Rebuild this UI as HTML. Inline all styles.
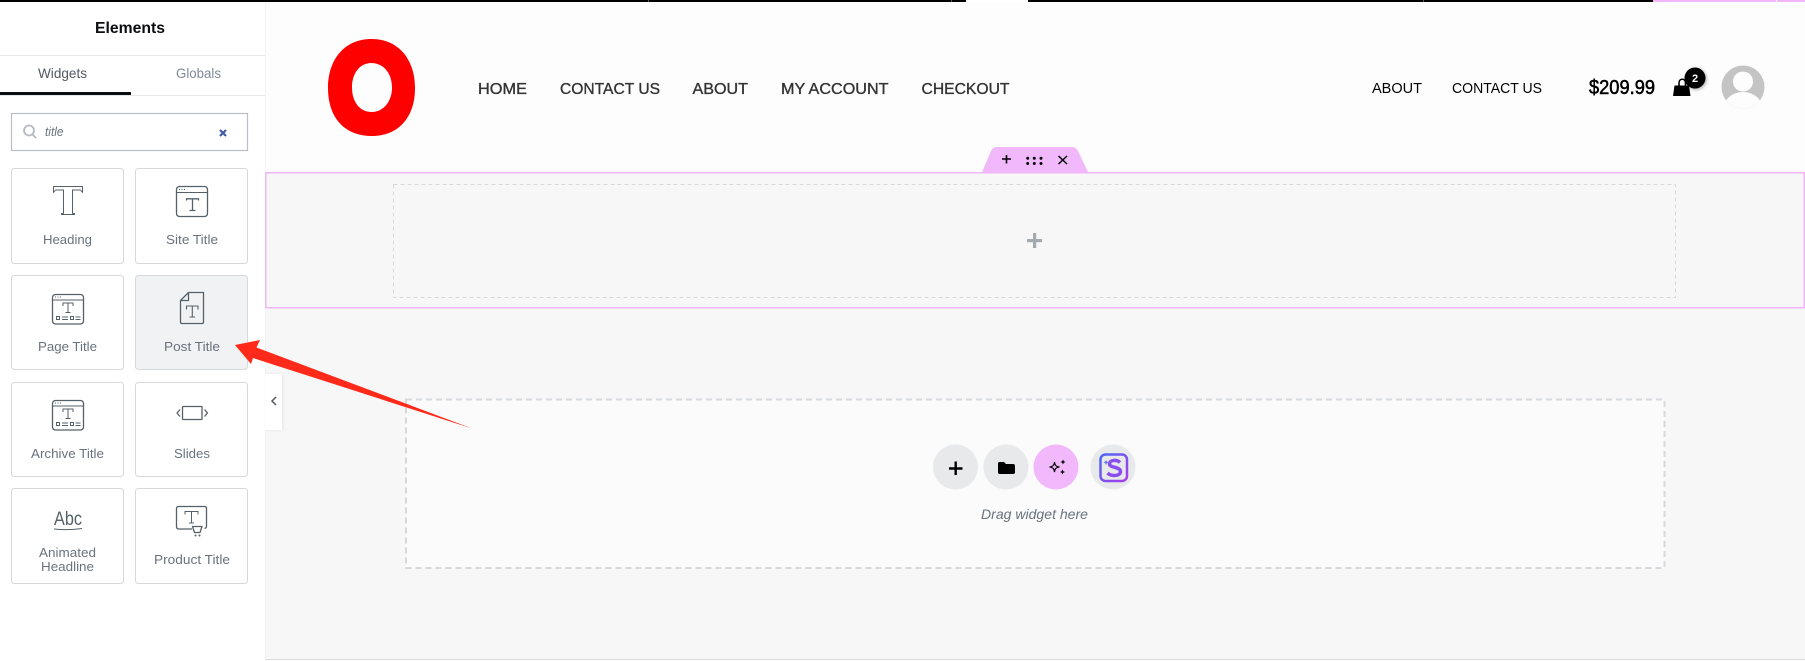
<!DOCTYPE html>
<html lang="en">
<head>
<meta charset="utf-8">
<title>Elements</title>
<style>
html,body{margin:0;padding:0;width:1805px;height:661px;overflow:hidden;background:#f7f7f7}
svg{display:block;position:absolute;left:0;top:0}
text{font-family:"Liberation Sans",sans-serif}
.lbl{font-size:13px;fill:#69727d}
.nav{font-size:16px;fill:#333;stroke:#333;stroke-width:.35}
.rn{font-size:15px;fill:#000}
.card{fill:#fff;stroke:#d5d8dc;stroke-width:1}
.ic{fill:none;stroke:#556068;stroke-width:1.3;stroke-linejoin:round}
.ic2{fill:none;stroke:#556068;stroke-width:1}
</style>
</head>
<body>
<svg width="1805" height="661" viewBox="0 0 1805 661" xmlns="http://www.w3.org/2000/svg">
<defs>
<linearGradient id="sg" x1="0" y1="0" x2="1" y2="1"><stop offset="0" stop-color="#4a68f5"/><stop offset="1" stop-color="#aa3ee8"/></linearGradient>
<filter id="sh" x="-30%" y="-30%" width="170%" height="170%"><feDropShadow dx="1" dy="1" stdDeviation="1.5" flood-color="#000" flood-opacity=".35"/></filter>
<filter id="sh2" x="-50%" y="-10%" width="200%" height="120%"><feDropShadow dx="1" dy="0" stdDeviation="1.5" flood-color="#000" flood-opacity=".08"/></filter>
<clipPath id="av"><circle cx="1743" cy="87" r="21.5"/></clipPath>
</defs>

<!-- canvas -->
<rect x="265" y="0" width="1540" height="661" fill="#f7f7f7"/>
<rect x="265" y="0" width="1540" height="172" fill="#fdfdfd"/>
<rect x="265" y="659" width="1540" height="1" fill="#d8d9db"/>
<rect x="265" y="660" width="1540" height="1" fill="#fff"/>

<!-- top bar -->
<rect x="0" y="0" width="1805" height="2" fill="#000"/>
<rect x="966" y="0" width="62" height="2" fill="#fff"/>
<rect x="1653" y="0" width="152" height="2" fill="#f1b5f8"/>
<rect x="648" y="0" width="1" height="2" fill="#555"/>
<rect x="951" y="0" width="1" height="2" fill="#555"/>
<rect x="1423" y="0" width="1" height="2" fill="#555"/>
<rect x="1776" y="0" width="1" height="2" fill="#fdfdfd"/>

<!-- logo -->
<path fill-rule="evenodd" fill="#ff0000" d="M371.500 39C399 39 415 60 415 88C415 117 399 136 371.500 136C344 136 328 117 328 88C328 60 344 39 371.500 39ZM371.500 63C360 63 352 73 352 87.500C352 102 360 112 371.500 112C383 112 392 102 392 87.500C392 73 383 63 371.500 63Z"/>

<!-- main nav -->
<text class="nav" x="478" y="94" textLength="49" lengthAdjust="spacingAndGlyphs">HOME</text>
<text class="nav" x="560" y="94" textLength="100" lengthAdjust="spacingAndGlyphs">CONTACT US</text>
<text class="nav" x="692.500" y="94" textLength="55.500" lengthAdjust="spacingAndGlyphs">ABOUT</text>
<text class="nav" x="781" y="94" textLength="107.500" lengthAdjust="spacingAndGlyphs">MY ACCOUNT</text>
<text class="nav" x="921.500" y="94" textLength="88" lengthAdjust="spacingAndGlyphs">CHECKOUT</text>

<!-- right nav -->
<text class="rn" x="1372" y="93" textLength="50" lengthAdjust="spacingAndGlyphs">ABOUT</text>
<text class="rn" x="1452" y="93" textLength="90" lengthAdjust="spacingAndGlyphs">CONTACT US</text>
<text x="1589" y="94" font-size="20" fill="#000" stroke="#000" stroke-width=".55" textLength="66" lengthAdjust="spacingAndGlyphs">$209.99</text>

<!-- bag -->
<path d="M1674.500 85.500H1689L1690.500 96H1673Z" fill="#000"/>
<path d="M1679 86V83C1679 78 1685.500 78 1685.500 83V86" fill="none" stroke="#000" stroke-width="1.600"/>
<circle cx="1695" cy="78" r="10.500" fill="#000" filter="url(#sh)"/>
<text x="1695" y="82" font-size="11" font-weight="700" fill="#fff" text-anchor="middle">2</text>

<!-- avatar -->
<circle cx="1743" cy="87" r="21.500" fill="#c4c4c4"/>
<g clip-path="url(#av)" fill="#fdfdfd">
<circle cx="1743" cy="81.500" r="10"/>
<ellipse cx="1743" cy="112" rx="21" ry="20"/>
</g>

<!-- section -->
<rect x="265.750" y="172.750" width="1538.500" height="135" fill="#f7f7f7" stroke="#f1b5f8" stroke-width="1.500"/>
<rect x="393.500" y="184.500" width="1282" height="113" fill="none" stroke="#d5d8dc" stroke-width="1" stroke-dasharray="4 3"/>
<rect x="1027" y="239" width="15" height="3.200" fill="#a4a9ae"/>
<rect x="1033" y="233" width="3.200" height="15" fill="#a4a9ae"/>

<!-- handle -->
<path d="M982 172L991 151Q993 147 997 147H1072Q1076 147 1078 151L1088 172Z" fill="#f1b9fb"/>
<path d="M1002 159H1011M1006.500 155V163.500" stroke="#000" stroke-width="1.600" fill="none"/>
<g fill="#000"><circle cx="1027.700" cy="158.300" r="1.500"/><circle cx="1034.300" cy="158.300" r="1.500"/><circle cx="1041" cy="158.300" r="1.500"/><circle cx="1027.700" cy="163.500" r="1.500"/><circle cx="1034.300" cy="163.500" r="1.500"/><circle cx="1041" cy="163.500" r="1.500"/></g>
<path d="M1058.500 156L1067 164M1067 156L1058.500 164" stroke="#000" stroke-width="1.500" fill="none"/>

<!-- drop area -->
<rect x="406" y="399.500" width="1258.500" height="168.500" fill="#fbfbfb" stroke="#d5d8dc" stroke-width="2" stroke-dasharray="6 4"/>
<circle cx="955.500" cy="467" r="22.500" fill="#e8e9eb"/>
<circle cx="1006" cy="467" r="22.500" fill="#e8e9eb"/>
<circle cx="1056" cy="467" r="22.500" fill="#f1b9fb"/>
<circle cx="1113" cy="467" r="22.500" fill="#e8e9eb"/>
<path d="M949 468.500H962.500M955.700 461.500V475" stroke="#000" stroke-width="2.400" fill="none"/>
<path d="M998 463.500Q998 462 999.500 462H1004L1006 464H1013Q1015 464 1015 466V472.500Q1015 474 1013 474H1000Q998 474 998 472.500Z" fill="#000"/>
<path d="M1054.500 462C1055 465.500 1056 466.500 1059.500 467C1056 467.500 1055 468.500 1054.500 472C1054 468.500 1053 467.500 1049.500 467C1053 466.500 1054 465.500 1054.500 462Z" fill="none" stroke="#000" stroke-width="1.100"/>
<path d="M1063 459.500L1063.800 461.200L1065.500 462L1063.800 462.800L1063 464.500L1062.200 462.800L1060.500 462L1062.200 461.200Z" fill="#000"/>
<path d="M1062.500 469.500L1063.300 471.200L1065 472L1063.300 472.800L1062.500 474.500L1061.700 472.800L1060 472L1061.700 471.200Z" fill="#000"/>
<rect x="1100.500" y="454.500" width="26.500" height="26.500" rx="5" fill="none" stroke="url(#sg)" stroke-width="2.500"/>
<path d="M1120 462.500C1117 459.500 1109.500 459.500 1109.500 464C1109.500 468 1120.500 466.500 1120.500 471.500C1120.500 476.500 1111 476.500 1107.500 473" fill="none" stroke="#8b4ff0" stroke-width="3.500"/>
<path d="M1106 460L1106.800 461.500L1108.500 462.500L1106.800 463.300L1106 465L1105.200 463.300L1103.500 462.500L1105.200 461.500Z" fill="#5f7cf5"/>
<text x="981" y="519" font-size="14" font-style="italic" fill="#69727d" textLength="107" lengthAdjust="spacingAndGlyphs">Drag widget here</text>

<!-- sidebar -->
<rect x="0" y="2" width="265" height="659" fill="#fff"/>
<rect x="265" y="2" width="1" height="170" fill="#f4f4f4"/>
<rect x="265" y="308" width="1" height="353" fill="#f1f1f1"/>
<text x="130" y="33" font-size="16" font-weight="700" fill="#0c0d0e" text-anchor="middle" textLength="70" lengthAdjust="spacingAndGlyphs">Elements</text>
<rect x="0" y="55" width="265" height="1" fill="#e6e8ea"/>
<text x="38" y="78" font-size="14" fill="#515962" textLength="49" lengthAdjust="spacingAndGlyphs">Widgets</text>
<text x="176" y="78" font-size="14" fill="#818a96" textLength="45" lengthAdjust="spacingAndGlyphs">Globals</text>
<rect x="0" y="95" width="265" height="1" fill="#e6e8ea"/>
<rect x="0" y="92" width="131" height="3" fill="#0c0d0e"/>

<!-- search -->
<rect x="11.500" y="113.500" width="236" height="37" fill="#fff" stroke="#babfc5" stroke-width="1.200"/>
<circle cx="29" cy="130.500" r="5" fill="none" stroke="#b5bac0" stroke-width="1.800"/>
<path d="M32.500 134.500L36 138" stroke="#b5bac0" stroke-width="1.800"/>
<text x="45" y="136" font-size="13" font-style="italic" fill="#69727d" textLength="18.500" lengthAdjust="spacingAndGlyphs">title</text>
<path d="M220 130L226 136M226 130L220 136" stroke="#3f5da0" stroke-width="2.200" fill="none"/>

<!-- cards -->
<rect class="card" x="11.500" y="168.500" width="112" height="95" rx="3"/>
<rect class="card" x="135.500" y="168.500" width="112" height="95" rx="3"/>
<rect class="card" x="11.500" y="275.500" width="112" height="94" rx="3"/>
<rect class="card" style="fill:#f1f2f3" x="135.500" y="275.500" width="112" height="94" rx="3"/>
<rect class="card" x="11.500" y="382.500" width="112" height="94" rx="3"/>
<rect class="card" x="135.500" y="382.500" width="112" height="94" rx="3"/>
<rect class="card" x="11.500" y="488.500" width="112" height="95" rx="3"/>
<rect class="card" x="135.500" y="488.500" width="112" height="95" rx="3"/>

<!-- labels -->
<text class="lbl" x="43" y="244" textLength="49" lengthAdjust="spacingAndGlyphs">Heading</text>
<text class="lbl" x="166" y="244" textLength="52" lengthAdjust="spacingAndGlyphs">Site Title</text>
<text class="lbl" x="38" y="351" textLength="59" lengthAdjust="spacingAndGlyphs">Page Title</text>
<text class="lbl" x="164" y="351" textLength="56" lengthAdjust="spacingAndGlyphs">Post Title</text>
<text class="lbl" x="31" y="458" textLength="73" lengthAdjust="spacingAndGlyphs">Archive Title</text>
<text class="lbl" x="174" y="458" textLength="36" lengthAdjust="spacingAndGlyphs">Slides</text>
<text class="lbl" x="39" y="557" textLength="57" lengthAdjust="spacingAndGlyphs">Animated</text>
<text class="lbl" x="41" y="571" textLength="53" lengthAdjust="spacingAndGlyphs">Headline</text>
<text class="lbl" x="154" y="564" textLength="76" lengthAdjust="spacingAndGlyphs">Product Title</text>

<!-- heading icon -->
<path class="ic" style="stroke-width:1" d="M53.500 186.500H82.500V192.500L80.500 190H72.500V213.500H74.500V214.500H61.500V213.500H63.500V190H55.500L53.500 192.500Z"/>

<!-- site title icon -->
<rect class="ic" x="176.500" y="186.500" width="31" height="30" rx="3"/>
<path class="ic2" d="M177 192.500H207"/>
<path d="M179 189.500H180M181.500 189.500H182.500M184 189.500H185" stroke="#556068" stroke-width="1"/>
<path class="ic" d="M186.500 200.500V198.800H198.500V200.500M192.500 198.800V210.500M189.500 210.500H195.500"/>

<!-- page title icon -->
<rect class="ic" x="52.500" y="294.500" width="31" height="29.500" rx="3"/>
<path class="ic2" d="M53 300H83"/>
<path d="M55 297H56M57.500 297H58.500M60 297H61" stroke="#556068" stroke-width="1"/>
<path class="ic2" d="M63 306V303H73V306M68 303V312.500M65.500 312.500H70.500"/>
<rect class="ic2" x="56.500" y="316.500" width="3" height="3"/>
<rect class="ic2" x="70.500" y="316.500" width="3" height="3"/>
<path class="ic2" d="M62 317H68M62 319.500H68M75.500 317H80.500M75.500 319.500H80.500"/>

<!-- archive title icon -->
<g transform="translate(0,106)">
<rect class="ic" x="52.500" y="294.500" width="31" height="29.500" rx="3"/>
<path class="ic2" d="M53 300H83"/>
<path d="M55 297H56M57.500 297H58.500M60 297H61" stroke="#556068" stroke-width="1"/>
<path class="ic2" d="M63 306V303H73V306M68 303V312.500M65.500 312.500H70.500"/>
<rect class="ic2" x="56.500" y="316.500" width="3" height="3"/>
<rect class="ic2" x="70.500" y="316.500" width="3" height="3"/>
<path class="ic2" d="M62 317H68M62 319.500H68M75.500 317H80.500M75.500 319.500H80.500"/>
</g>

<!-- post title icon -->
<path class="ic" d="M188.500 292.500H203.500V322Q203.500 323.500 202 323.500H182Q180.500 323.500 180.500 322V300.500ZM188.500 292.500V300.500H180.500"/>
<path class="ic" style="stroke-width:1.100" d="M186.500 309.500V306H198V309.500M192.300 306V317M189.500 317H195"/>

<!-- slides icon -->
<rect class="ic" x="182.500" y="406.500" width="19.500" height="13" rx=".5"/>
<path class="ic" d="M180 409.500L177 413L180 416.500M204.500 409.500L207.500 413L204.500 416.500"/>

<!-- abc icon -->
<text x="54" y="525" font-size="19" fill="#556068" textLength="28" lengthAdjust="spacingAndGlyphs">Abc</text>
<path d="M54 529Q68 530.500 82 528.500" fill="none" stroke="#556068" stroke-width="1"/>

<!-- product title icon -->
<path class="ic" d="M192 529H179Q176.500 529 176.500 526.500V508.500Q176.500 506.500 179 506.500H204.500Q206.500 506.500 206.500 508.500V526.500Q206.500 528 204.500 528.500"/>
<path class="ic2" d="M185 514.500V511.500H198V514.500M191.500 511.500V523M189 523H194"/>
<path class="ic" d="M192.500 526.500H202L200 532.500H194.500Z"/>
<circle cx="195.500" cy="535.500" r="1" fill="#556068"/>
<circle cx="199.500" cy="535.500" r="1" fill="#556068"/>

<!-- collapse tab -->
<rect x="265" y="374" width="17" height="56" fill="#fff" filter="url(#sh2)"/>
<path d="M276 397L272 401L276 405" fill="none" stroke="#515962" stroke-width="1.500"/>

<!-- arrow -->
<path d="M235 345L260 340L256.500 347.500L472 428.500L253 358L251 364Z" fill="#ff2a1a"/>
</svg>
</body>
</html>
